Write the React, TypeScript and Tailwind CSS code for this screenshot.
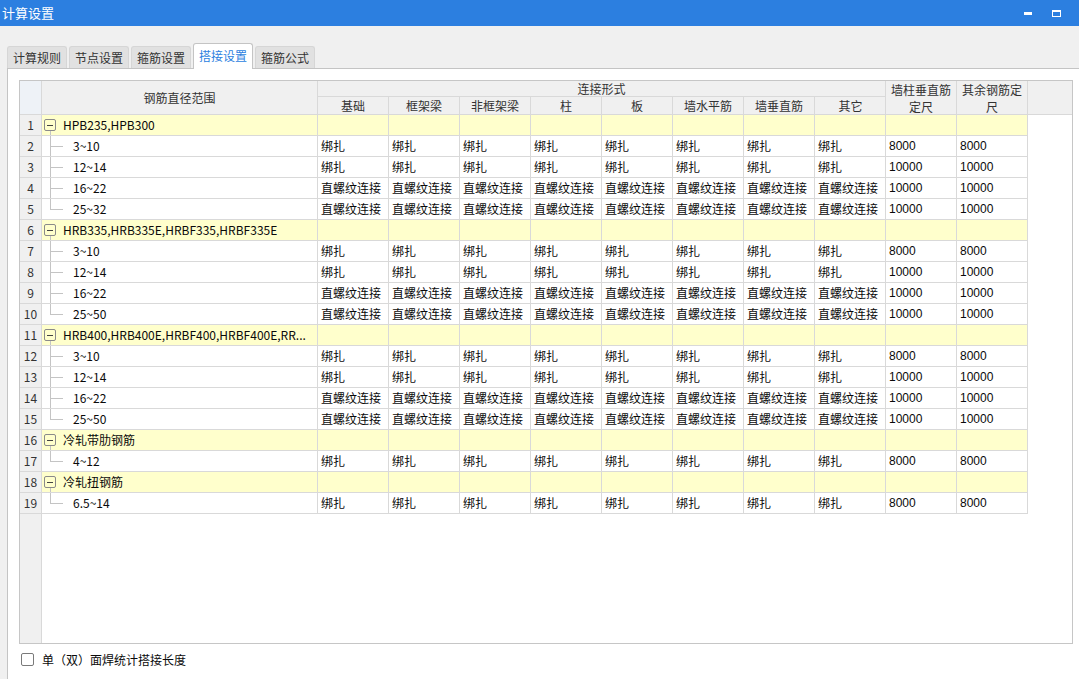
import React from "react";

const connCols = ["基础", "框架梁", "非框架梁", "柱", "板", "墙水平筋", "墙垂直筋", "其它"];

type Item = { range: string; kind: string; len: string };
type Group = { name: string; items: Item[] };

const std = (last: string): Item[] => [
  { range: "3~10", kind: "绑扎", len: "8000" },
  { range: "12~14", kind: "绑扎", len: "10000" },
  { range: "16~22", kind: "直螺纹连接", len: "10000" },
  { range: last, kind: "直螺纹连接", len: "10000" },
];

const groups: Group[] = [
  { name: "HPB235,HPB300", items: std("25~32") },
  { name: "HRB335,HRB335E,HRBF335,HRBF335E", items: std("25~50") },
  { name: "HRB400,HRB400E,HRBF400,HRBF400E,RR...", items: std("25~50") },
  { name: "冷轧带肋钢筋", items: [{ range: "4~12", kind: "绑扎", len: "8000" }] },
  { name: "冷轧扭钢筋", items: [{ range: "6.5~14", kind: "绑扎", len: "8000" }] },
];

type Row =
  | { type: "group"; label: string }
  | { type: "item"; item: Item; last: boolean };

const rows: Row[] = groups.flatMap((g) => [
  { type: "group", label: g.name } as Row,
  ...g.items.map((it, i) => ({ type: "item", item: it, last: i === g.items.length - 1 }) as Row),
]);

const cellLine = "border-r border-b border-[#d9d9d9]";

function TreeCell({ row }: { row: Row }) {
  if (row.type === "group") {
    return (
      <div className={`relative w-[276px] shrink-0 ${cellLine} bg-[#ffffcc] pl-[21px] pr-[4px]`}>
        <span className="absolute left-[2px] top-[4px] flex h-[12px] w-[12px] items-center justify-center rounded-[2px] border border-[#8a8a8a]">
          <span className="h-px w-[6px] bg-[#444]" />
        </span>
        <span className="absolute left-[8px] top-[16px] h-[4px] w-px bg-[#c4c4c4]" />
        <span className="block whitespace-nowrap">{row.label}</span>
      </div>
    );
  }
  return (
    <div className={`relative w-[276px] shrink-0 ${cellLine} pl-[31px]`}>
      <span className={`absolute left-[8px] top-0 w-px bg-[#c4c4c4] ${row.last ? "h-[10px]" : "h-[20px]"}`} />
      <span className="absolute left-[8px] top-[10px] h-px w-[13px] bg-[#c4c4c4]" />
      <span className="block whitespace-nowrap">{row.item.range}</span>
    </div>
  );
}

function DataRow({ row, index }: { row: Row; index: number }) {
  const yellow = row.type === "group";
  return (
    <div className="flex h-[21px] shrink-0 leading-[20px]">
      <div className={`w-[22px] shrink-0 ${cellLine} bg-[#f0f0f0] text-center text-[#333]`}>{index + 1}</div>
      <TreeCell row={row} />
      {connCols.map((c) => (
        <div key={c} className={`w-[71px] shrink-0 ${cellLine} px-[3px] whitespace-nowrap ${yellow ? "bg-[#ffffcc]" : ""}`}>
          {row.type === "item" ? row.item.kind : ""}
        </div>
      ))}
      {[0, 1].map((k) => (
        <div key={k} className={`w-[71px] shrink-0 ${cellLine} px-[3px] font-['Liberation_Sans',sans-serif] ${yellow ? "bg-[#ffffcc]" : ""}`}>
          {row.type === "item" ? row.item.len : ""}
        </div>
      ))}
    </div>
  );
}

function Grid() {
  return (
    <div className="flex h-[564px] w-[1054px] flex-col overflow-hidden border border-[#c6c6c6] bg-white">
      <div className="flex h-[34px] shrink-0 border-b border-[#d9d9d9] bg-[#f0f0f0] text-[#333]">
        <div className="w-[22px] shrink-0 border-r border-[#d9d9d9] bg-[#eef2f7]" />
        <div className="flex w-[276px] shrink-0 items-center justify-center border-r border-[#d9d9d9]">钢筋直径范围</div>
        <div className="flex w-[568px] shrink-0 flex-col border-r border-[#d9d9d9]">
          <div className="flex h-[16px] items-center justify-center border-b border-[#d9d9d9] leading-[15px]">连接形式</div>
          <div className="flex flex-1">
            {connCols.map((c, i) => (
              <div
                key={c}
                className={`flex w-[71px] shrink-0 items-center justify-center leading-[17px] ${i < connCols.length - 1 ? "border-r border-[#d9d9d9]" : ""}`}
              >
                {c}
              </div>
            ))}
          </div>
        </div>
        <div className="flex w-[71px] shrink-0 items-center justify-center border-r border-[#d9d9d9] px-[5px] text-center leading-[17px]">
          墙柱垂直筋定尺
        </div>
        <div className="flex w-[71px] shrink-0 items-center justify-center border-r border-[#d9d9d9] px-[5px] text-center leading-[17px]">
          其余钢筋定尺
        </div>
        <div className="flex-1" />
      </div>
      {rows.map((r, i) => (
        <DataRow key={i} row={r} index={i} />
      ))}
      <div className="flex flex-1">
        <div className="w-[22px] shrink-0 border-r border-[#d9d9d9] bg-[#f0f0f0]" />
      </div>
    </div>
  );
}

const tabs = ["计算规则", "节点设置", "箍筋设置", "搭接设置", "箍筋公式"];

export default function App() {
  return (
    <div className="flex h-[679px] w-[1079px] flex-col overflow-hidden bg-[#f0f0f0] font-['Noto_Sans_CJK_SC',sans-serif] text-[12px] text-[#0a0a0a]">
      <div className="flex h-[26px] shrink-0 items-center bg-[#2c7fe0] pl-[2px] text-[13px] text-white">
        <span>计算设置</span>
        <div className="ml-auto flex items-center">
          <span className="mr-[20px] h-[3px] w-[8px] bg-white" />
          <span className="mr-[18px] h-[7px] w-[9px] border border-t-2 border-white" />
        </div>
      </div>
      <div className="mt-[17px] flex h-[25px] shrink-0 items-end gap-[2px] pl-[7px]">
        {tabs.map((t) => {
          const active = t === "搭接设置";
          return active ? (
            <div
              key={t}
              className="relative z-10 -mb-px flex h-[26px] w-[60px] items-center justify-center rounded-t-[3px] border border-b-0 border-[#c4c4c4] bg-white pb-px text-[#2c7fe0]"
            >
              {t}
            </div>
          ) : (
            <div
              key={t}
              className="flex h-[22px] w-[60px] items-center justify-center rounded-t-[3px] border border-b-0 border-[#d6d6d6] bg-[#e1e1e1] text-[#333]"
            >
              {t}
            </div>
          );
        })}
      </div>
      <div className="ml-[7px] flex flex-1 flex-col border-l border-t border-[#c4c4c4] bg-white pl-[11px] pt-[11px]">
        <Grid />
        <div className="mt-[9px] flex items-center">
          <span className="ml-[2px] h-[13px] w-[13px] rounded-[2px] border border-[#7a7a7a] bg-white" />
          <span className="ml-[8px] leading-[13px]">单（双）面焊统计搭接长度</span>
        </div>
      </div>
    </div>
  );
}
